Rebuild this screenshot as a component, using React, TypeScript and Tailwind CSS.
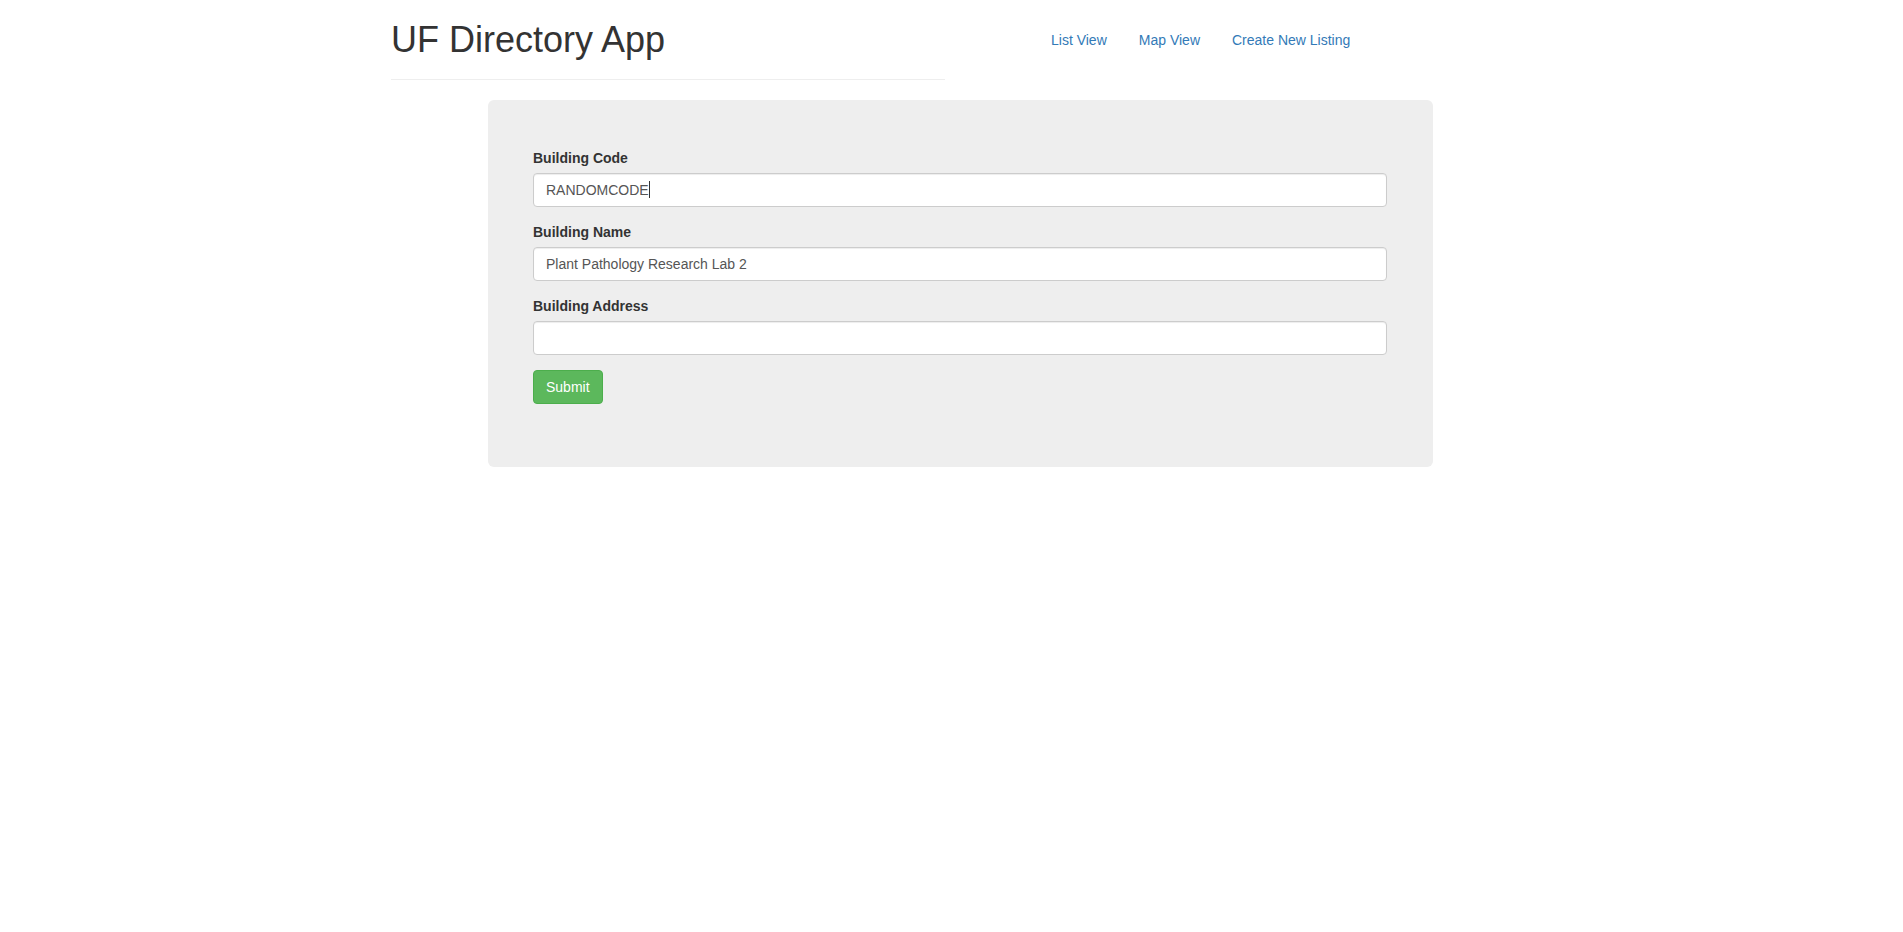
import React from "react";

const font = { fontFamily: '"Liberation Sans", Arial, Helvetica, sans-serif' };

function Field({ label, children }: { label: string; children: React.ReactNode }) {
  return (
    <div className="mb-[15px]">
      <label className="block mb-[5px] text-[14px] leading-[20px] font-bold text-[#333]">{label}</label>
      {children}
    </div>
  );
}

const inputCls =
  "block w-full h-[34px] px-[12px] py-[6px] text-[14px] leading-[20px] text-[#555] bg-white border border-[#ccc] rounded-[4px] shadow-[inset_0_1px_1px_rgba(0,0,0,0.075)] outline-none";

export default function App() {
  return (
    <div className="min-h-[932px] bg-white text-[#333]" style={font}>
      <div className="flex items-start ml-[391px]">
        <div className="w-[554px] border-b border-[#eee] pb-[9px]">
          <h1 className="mt-[20px] mb-[10px] text-[36px] leading-[39.6px] font-normal text-[#333]">UF Directory App</h1>
        </div>
        <ul className="flex ml-[89px] mt-[20px]">
          {["List View", "Map View", "Create New Listing"].map((t) => (
            <li key={t} className="ml-[2px]">
              <a className="block px-[15px] py-[10px] text-[14px] leading-[20px] text-[#337ab7] cursor-pointer">{t}</a>
            </li>
          ))}
        </ul>
      </div>

      <div className="ml-[488px] mt-[20px] w-[945px] h-[367px] bg-[#eee] rounded-[6px] pt-[48px] pl-[45px] pr-[46px]">
        <Field label="Building Code">
          <div className={inputCls + " flex items-center"}>
            <span>RANDOMCODE</span>
            <span className="inline-block w-px h-[17px] bg-[#333]" />
          </div>
        </Field>
        <Field label="Building Name">
          <input className={inputCls} readOnly value="Plant Pathology Research Lab 2" />
        </Field>
        <Field label="Building Address">
          <input className={inputCls} readOnly value="" />
        </Field>
        <button className="h-[34px] px-[12px] py-[6px] text-[14px] leading-[20px] text-white bg-[#5cb85c] border border-[#4cae4c] rounded-[4px]">
          Submit
        </button>
      </div>
    </div>
  );
}
